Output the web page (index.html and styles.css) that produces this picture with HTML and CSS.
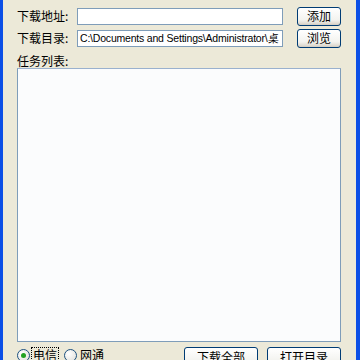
FILE: index.html
```html
<!DOCTYPE html>
<html>
<head>
<meta charset="utf-8">
<link rel="stylesheet" href="styles.css">
</head>
<body>
<div class="window">
  <div class="frame-left"></div>
  <div class="content">
    <div class="row">
      <span class="label">下载地址:</span>
      <div class="input"></div>
      <button class="btn small">添加</button>
    </div>
    <div class="row row2">
      <span class="label">下载目录:</span>
      <div class="input path">C:\Documents and Settings\Administrator\桌</div>
      <button class="btn small">浏览</button>
    </div>
    <div class="list-label">任务列表:</div>
    <div class="list"></div>
    <div class="bottom">
      <span class="radio checked"></span><span class="rtext focus">电信</span>
      <span class="radio"></span><span class="rtext">网通</span>
      <span class="spacer"></span>
      <button class="btn wide">下载全部</button>
      <button class="btn wide">打开目录</button>
    </div>
  </div>
  <div class="frame-right"></div>
</div>
</body>
</html>
```
FILE: styles.css
```css
html, body { margin: 0; padding: 0; }
* { box-sizing: border-box; }
body {
  background: #ECE9D8;
  font-family: "Noto Sans CJK SC", "DejaVu Sans", sans-serif;
  font-size: 12px;
  color: #000;
  overflow: hidden;
}
.window { display: flex; width: 360px; height: 360px; overflow: hidden; }
.frame-left { width: 3px; background: #0B4FE6; flex: none; }
.frame-right { width: 4px; background: #0B4FE6; flex: none; }
.content {
  flex: 1;
  padding: 7px 15px 0 14px;
  display: flex;
  flex-direction: column;
  overflow: hidden;
}
.content > * { flex: none; }
.row { display: flex; align-items: center; height: 18px; }
.row2 { margin-top: 4px; }
.label { width: 60px; line-height: 16px; flex: none; }
.input {
  width: 206px;
  height: 17px;
  background: #fff;
  border: 1px solid #7F9DB9;
  font-family: "Liberation Sans", sans-serif;
  font-size: 10.5px;
  line-height: 15px;
  padding-left: 2px;
  white-space: nowrap;
  overflow: hidden;
  flex: none;
}
.input.path { letter-spacing: -0.2px; }
.btn {
  font-family: "Noto Sans CJK SC", sans-serif;
  font-size: 12px;
  line-height: 14px;
  padding: 0;
  border: 1px solid #003C74;
  border-radius: 3px;
  background: linear-gradient(#FFFFFF, #F3F3EF 70%, #D6D0C5);
  box-shadow: inset 0 -1px 0 #D6D0C5;
  color: #000;
  flex: none;
}
.btn.small { width: 44px; height: 19px; margin-left: 14px; }
.list-label { margin-top: 6px; line-height: 15px; height: 15px; }
.list {
  margin-top: 0;
  height: 274px;
  background: #FBFCFD;
  border: 1px solid #7F9DB9;
  border-top-color: #9AB1CE;
}
.bottom {
  margin-top: 5px;
  display: flex;
  align-items: flex-start;
  height: 20px;
}
.radio {
  width: 13px;
  height: 13px;
  border: 1px solid #1C5180;
  border-radius: 50%;
  background: radial-gradient(circle at 35% 35%, #fff, #DCDCD7);
  margin-top: 2px;
  position: relative;
  flex: none;
}
.radio.checked::after {
  content: "";
  position: absolute;
  left: 3px; top: 3px;
  width: 5px; height: 5px;
  border-radius: 50%;
  background: #21A121;
}
.rtext { margin-left: 2px; line-height: 14px; padding: 0 1px; margin-top: 1px; }
.rtext.focus { outline: 1px dotted #000; outline-offset: 0; margin-right: 6px; }
.spacer { flex: 1; }
.btn.wide { width: 74px; height: 20px; margin-left: 9px; }
```
